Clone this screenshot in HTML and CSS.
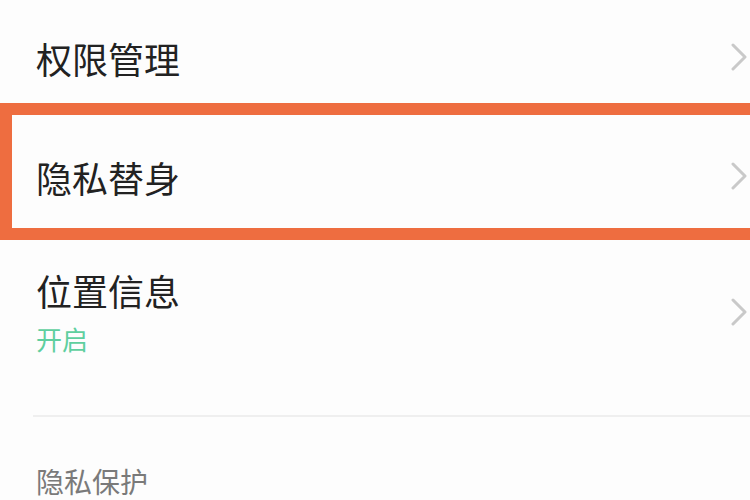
FILE: index.html
```html
<!DOCTYPE html>
<html lang="zh-CN">
<head>
    <meta charset="UTF-8">
    <meta name="viewport" content="width=device-width, initial-scale=1.0">
    <title>隐私</title>
    <link rel="stylesheet" href="styles.css">
</head>
<body>

    <div class="list">
        <div class="row row-top">
            <span class="title">权限管理</span>
            <svg class="arrow" width="18" height="28" viewBox="0 0 18 28"><polyline points="3,2 15,14 3,26"/></svg>
        </div>

        <div class="mark">
            <div class="row row-mark">
                <span class="title">隐私替身</span>
                <svg class="arrow" width="18" height="28" viewBox="0 0 18 28"><polyline points="3,2 15,14 3,26"/></svg>
            </div>
        </div>

        <div class="row row-loc">
            <div class="texts">
                <span class="title">位置信息</span>
                <span class="sub">开启</span>
            </div>
            <svg class="arrow" width="18" height="28" viewBox="0 0 18 28"><polyline points="3,2 15,14 3,26"/></svg>
        </div>

        <div class="divider"></div>

        <p class="section">隐私保护</p>
    </div>

</body>
</html>
```

FILE: styles.css
```css
*{
    margin: 0;
    padding: 0;
    box-sizing: border-box;
}
body{
    width: 750px;
    height: 500px;
    overflow: hidden;
    background-color: #fdfdfd;
    font-family: "Noto Sans CJK SC", "Noto Sans", sans-serif;
}
.row{
    display: flex;
    justify-content: space-between;
    align-items: center;
    padding-left: 36px;
    padding-right: 2px;
}
.title{
    font-size: 36px;
    line-height: 36px;
    color: #222;
}
.arrow polyline{
    fill: none;
    stroke: #c9c9c9;
    stroke-width: 3;
    stroke-linecap: round;
    stroke-linejoin: round;
}
.row-top{
    height: 103px;
    padding-top: 40px;
    align-items: flex-start;
}
.row-top .arrow{
    margin-top: 3px;
}
.mark{
    width: 780px;
    height: 137px;
    border: 12px solid #ee6d40;
}
.row-mark{
    height: 113px;
    padding-left: 24px;
    padding-right: 20px;
    padding-top: 44px;
    align-items: flex-start;
}
.row-mark .arrow{
    margin-top: 3px;
}
.row-loc{
    height: 175px;
    padding-top: 31px;
    padding-bottom: 63px;
}
.texts{
    display: flex;
    flex-direction: column;
}
.sub{
    margin-top: 18px;
    font-size: 26px;
    line-height: 26px;
    color: #5fcf9f;
}
.divider{
    height: 2px;
    margin-left: 33px;
    background-color: #efefef;
}
.section{
    margin-top: 50px;
    padding-left: 36px;
    font-size: 28px;
    line-height: 28px;
    color: #7a7a7a;
}
```
